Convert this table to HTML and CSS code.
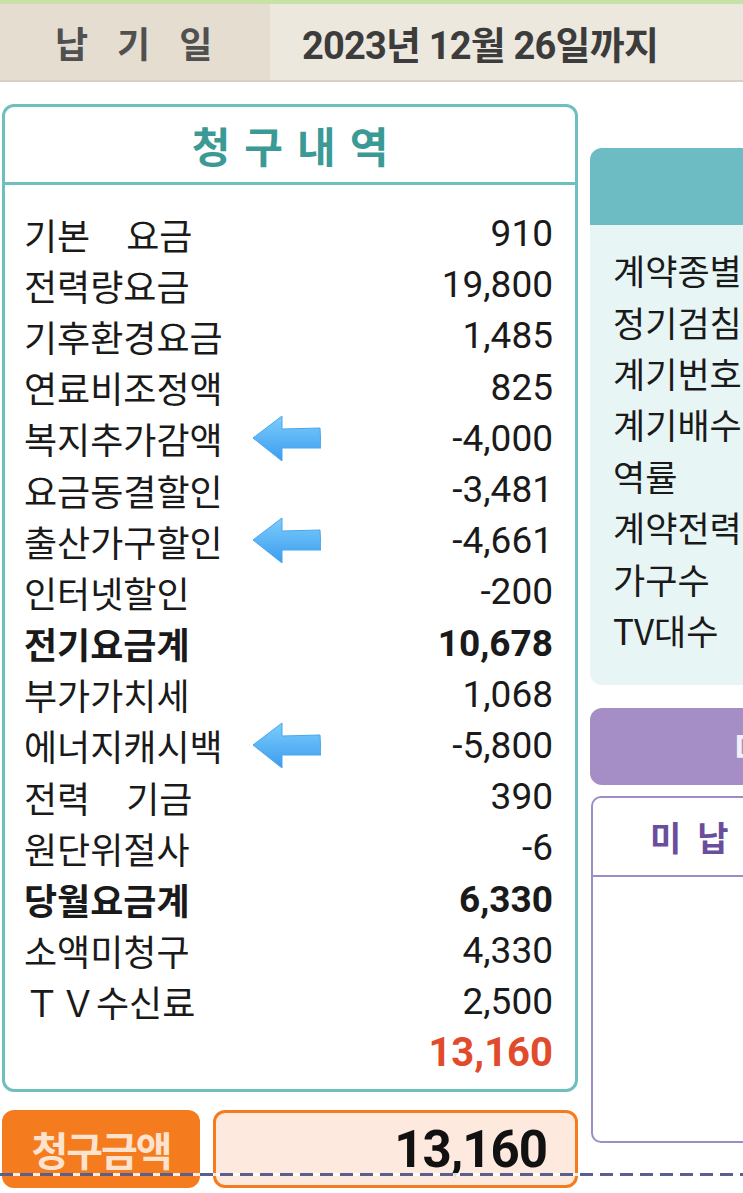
FILE: index.html
```html
<!DOCTYPE html>
<html lang="ko">
<head>
<meta charset="utf-8">
<title>청구내역</title>
<link rel="stylesheet" href="styles.css">
</head>
<body>
<div class="page">
  <header class="due">
    <div class="due-label">납기일</div>
    <div class="due-date">2023년 12월 26일까지</div>
  </header>
  <main class="main">
    <section class="left">
      <div class="bill">
        <h2 class="bill-title">청구내역</h2>
        <ul class="bill-rows">
          <li class="row"><span class="lbl">기본　요금</span><span class="val">910</span></li>
          <li class="row"><span class="lbl">전력량요금</span><span class="val">19,800</span></li>
          <li class="row"><span class="lbl">기후환경요금</span><span class="val">1,485</span></li>
          <li class="row"><span class="lbl">연료비조정액</span><span class="val">825</span></li>
          <li class="row"><span class="lbl">복지추가감액</span><svg class="arrow" viewBox="0 0 70 46" width="70" height="46"><use href="#arr"/></svg><span class="val">-4,000</span></li>
          <li class="row"><span class="lbl">요금동결할인</span><span class="val">-3,481</span></li>
          <li class="row"><span class="lbl">출산가구할인</span><svg class="arrow" viewBox="0 0 70 46" width="70" height="46"><use href="#arr"/></svg><span class="val">-4,661</span></li>
          <li class="row"><span class="lbl">인터넷할인</span><span class="val">-200</span></li>
          <li class="row bold"><span class="lbl">전기요금계</span><span class="val">10,678</span></li>
          <li class="row"><span class="lbl">부가가치세</span><span class="val">1,068</span></li>
          <li class="row"><span class="lbl">에너지캐시백</span><svg class="arrow" viewBox="0 0 70 46" width="70" height="46"><use href="#arr"/></svg><span class="val">-5,800</span></li>
          <li class="row"><span class="lbl">전력　기금</span><span class="val">390</span></li>
          <li class="row"><span class="lbl">원단위절사</span><span class="val">-6</span></li>
          <li class="row bold"><span class="lbl">당월요금계</span><span class="val">6,330</span></li>
          <li class="row"><span class="lbl">소액미청구</span><span class="val">4,330</span></li>
          <li class="row"><span class="lbl">ＴＶ수신료</span><span class="val">2,500</span></li>
          <li class="row sum"><span class="lbl"></span><span class="val">13,160</span></li>
        </ul>
      </div>
      <div class="total">
        <div class="total-label">청구금액</div>
        <div class="total-box">13,160</div>
      </div>
    </section>
    <aside class="right">
      <div class="info">
        <div class="info-head">고객정보</div>
        <ul class="info-body">
          <li>계약종별</li>
          <li>정기검침일</li>
          <li>계기번호</li>
          <li>계기배수</li>
          <li>역률</li>
          <li>계약전력</li>
          <li>가구수</li>
          <li>TV대수</li>
        </ul>
      </div>
      <div class="purple-bar">미납내역</div>
      <div class="arrears">
        <div class="arrears-head">미납요금</div>
      </div>
    </aside>
  </main>
  <div class="dash"></div>
</div>
<svg width="0" height="0" class="defs">
  <defs>
    <linearGradient id="ag" x1="0" y1="0" x2="0" y2="1">
      <stop offset="0" stop-color="#7ccdfb"/>
      <stop offset="1" stop-color="#3b9cee"/>
    </linearGradient>
    <polygon id="arr" points="2,23 31,1 31,14 69,13 70,33 31,33 31,46" fill="url(#ag)" stroke="#4aa6ee" stroke-width="1" stroke-linejoin="round"/>
  </defs>
</svg>
</body>
</html>
```
FILE: styles.css
```css
html, body {
  margin: 0;
  padding: 0;
  background: #ffffff;
  width: 743px;
  height: 1193px;
  overflow: hidden;
}
.page {
  position: relative;
  width: 743px;
  height: 1193px;
  overflow: hidden;
  font-family: "Noto Sans CJK KR", "Noto Sans", sans-serif;
  color: #1a1a1a;
}
.defs { position: absolute; }
ul { list-style: none; margin: 0; padding: 0; }
h2 { margin: 0; }

/* header */
.due {
  display: flex;
  height: 76px;
  border-top: 4px solid #c7e2a6;
  border-bottom: 2px solid #d8d0c2;
}
.due-label {
  width: 270px;
  box-sizing: border-box;
  background: #e4ddd0;
  display: flex;
  align-items: center;
  padding-left: 55px;
  font-size: 36px;
  font-weight: 700;
  letter-spacing: 29px;
  color: #505050;
  white-space: nowrap;
}
.due-date {
  flex: 1;
  background: #ece8de;
  display: flex;
  align-items: center;
  padding-left: 32px;
  font-family: Roboto, "Noto Sans CJK KR", sans-serif;
  font-size: 38px;
  font-weight: 700;
  letter-spacing: -0.8px;
  color: #3c3c3c;
  white-space: nowrap;
}

/* layout */
.main {
  display: flex;
  align-items: flex-start;
}
.left {
  width: 576px;
  flex-shrink: 0;
  margin-left: 2px;
  margin-top: 22px;
}
.right {
  width: 340px;
  flex-shrink: 0;
  margin-left: 12px;
  margin-top: 66px;
}

/* bill card */
.bill {
  border: 3px solid #6fbfbf;
  border-radius: 12px;
}
.bill-title {
  height: 75px;
  border-bottom: 3px solid #6fbfbf;
  display: flex;
  align-items: center;
  justify-content: center;
  padding-left: 14px;
  font-size: 42px;
  font-weight: 700;
  letter-spacing: 14px;
  color: #3c9a96;
}
.bill-rows {
  padding: 23px 0 11px;
}
.row {
  position: relative;
  display: flex;
  justify-content: space-between;
  align-items: center;
  height: 51.2px;
  padding: 0 22px 0 19px;
}
.lbl {
  font-size: 36px;
  white-space: pre;
}
.val {
  font-family: Roboto, sans-serif;
  font-size: 37px;
}
.row.bold .lbl, .row.bold .val { font-weight: 700; }
.row.sum .val {
  color: #e14a2b;
  font-weight: 700;
  font-size: 40px;
}
.arrow {
  position: absolute;
  left: 246px;
  top: 2px;
}

/* total */
.total {
  display: flex;
  gap: 13px;
  margin-top: 18px;
  height: 78px;
}
.total-label {
  width: 198px;
  background: #f57c1e;
  border-radius: 12px;
  display: flex;
  align-items: center;
  justify-content: center;
  font-size: 40px;
  font-weight: 700;
  color: #fde3cd;
  letter-spacing: -2px;
}
.total-box {
  flex: 1;
  box-sizing: border-box;
  background: #fde9dd;
  border: 3px solid #f57c1e;
  border-radius: 12px;
  display: flex;
  align-items: center;
  justify-content: flex-end;
  padding-right: 28px;
  font-family: Roboto, sans-serif;
  font-size: 51px;
  font-weight: 700;
  color: #111;
  letter-spacing: -1px;
}

/* right column */
.info {
  border-radius: 12px;
  overflow: hidden;
  background: #e7f5f5;
}
.info-head {
  height: 77px;
  background: #6dbcc3;
  color: #ffffff;
  font-size: 35px;
  font-weight: 700;
  display: flex;
  align-items: center;
  padding-left: 170px;
}
.info-body {
  padding: 19px 0 30px 23px;
}
.info-body li {
  height: 51.4px;
  display: flex;
  align-items: center;
  font-size: 35px;
  white-space: nowrap;
}
.purple-bar {
  margin-top: 23px;
  height: 77px;
  background: #a58ec6;
  border-radius: 12px;
  display: flex;
  align-items: center;
  padding-left: 144px;
  font-size: 35px;
  font-weight: 700;
  color: #f4f0fa;
  letter-spacing: 14px;
}
.arrears {
  margin-top: 11px;
  height: 347px;
  box-sizing: border-box;
  border: 2px solid #9d8dc5;
  border-radius: 10px;
  margin-left: 1px;
}
.arrears-head {
  height: 77px;
  border-bottom: 2px solid #9d8dc5;
  display: flex;
  align-items: center;
  padding-left: 57px;
  font-size: 34px;
  font-weight: 700;
  color: #6b4d9d;
  letter-spacing: 16px;
  white-space: nowrap;
}

/* dashed cut line */
.dash {
  position: absolute;
  left: 0;
  top: 1173px;
  width: 743px;
  height: 3px;
  background: repeating-linear-gradient(90deg, #5a5f8e 0 13px, rgba(255, 255, 255, 0.85) 13px 20px);
}
```
